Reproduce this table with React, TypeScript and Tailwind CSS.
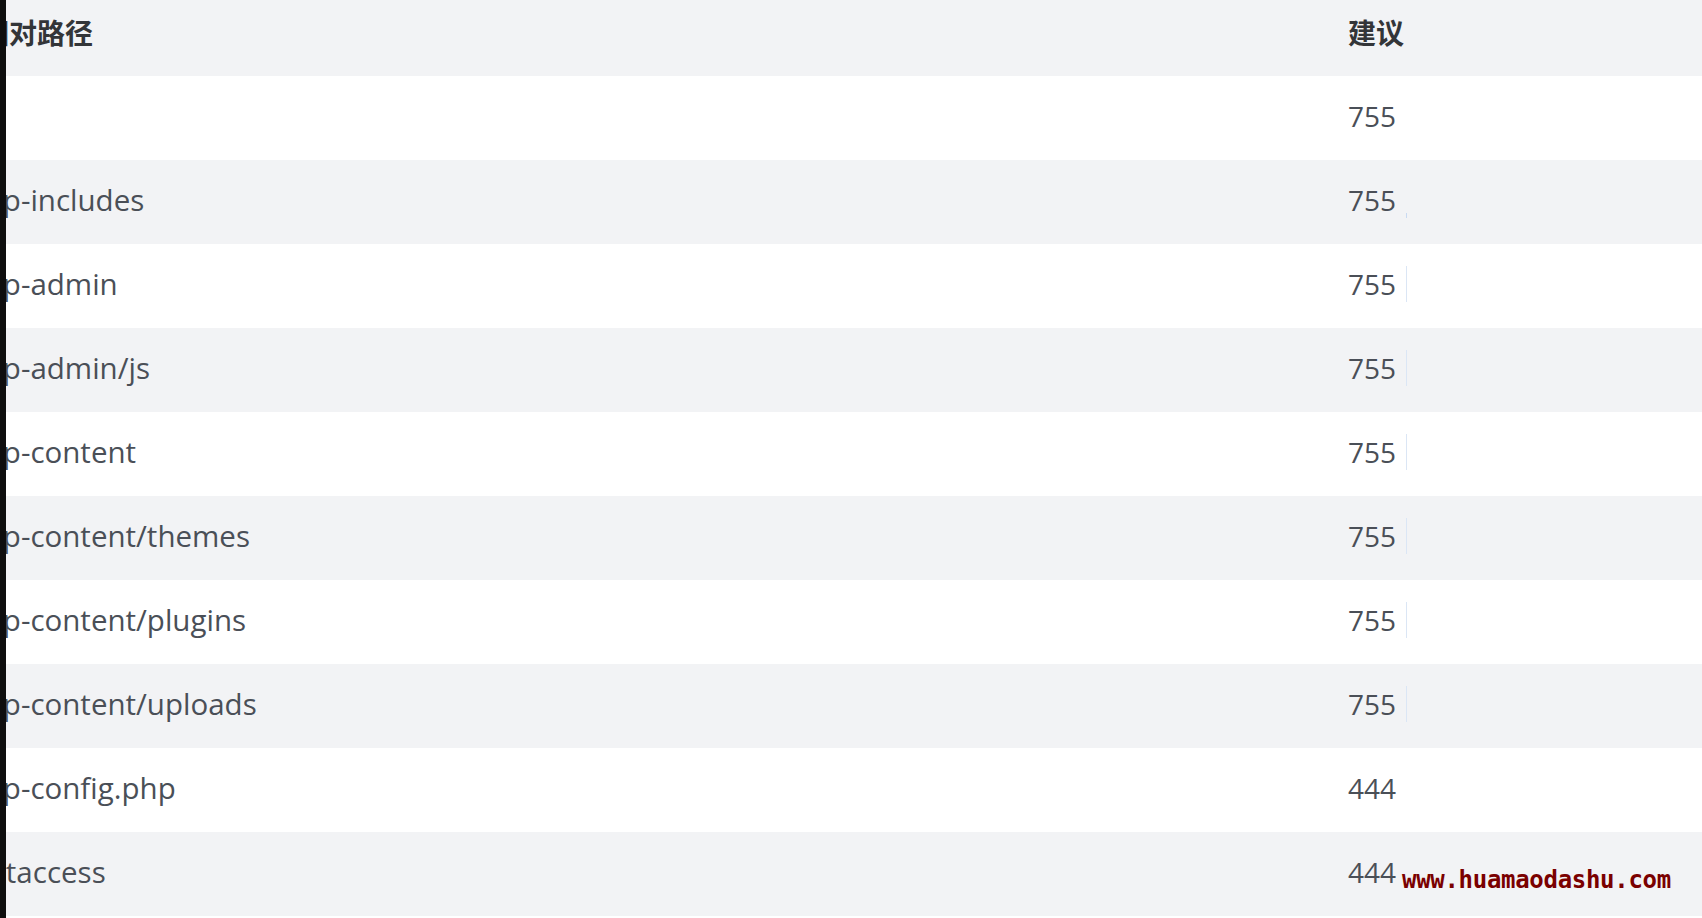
const rows = [
  { path: 'wordpress', perm: '755', mark: null },
  { path: 'wp-includes', perm: '755', mark: 'tick' },
  { path: 'wp-admin', perm: '755', mark: 'line' },
  { path: 'wp-admin/js', perm: '755', mark: 'line' },
  { path: 'wp-content', perm: '755', mark: 'line' },
  { path: 'wp-content/themes', perm: '755', mark: 'line' },
  { path: 'wp-content/plugins', perm: '755', mark: 'line' },
  { path: 'wp-content/uploads', perm: '755', mark: 'line' },
  { path: 'wp-config.php', perm: '444', mark: null },
  { path: '.htaccess', perm: '444', mark: null },
];

export default function App() {
  return (
    <div
      className="relative flex h-[918px] w-full overflow-hidden bg-white"
      style={{ fontFamily: '"Open Sans", "Noto Sans CJK SC", sans-serif' }}
    >
      <div className="w-[6px] shrink-0 bg-[#0e0e0e]" />
      <div className="flex-1 overflow-hidden">
        <div className="ml-[-25px] flex flex-col">
          <div className="grid h-[76px] grid-cols-[1367px_1fr] items-center bg-[#f2f3f5] pb-[12px] text-[28px] font-bold text-[#333538]">
            <div style={{ fontFamily: '"Noto Sans CJK SC", sans-serif' }}>相对路径</div>
            <div style={{ fontFamily: '"Noto Sans CJK SC", sans-serif' }}>建议</div>
          </div>
          {rows.map((r, i) => (
            <div
              key={r.path}
              className={
                'grid h-[84px] grid-cols-[1367px_1fr] items-center pb-[4px] text-[28px] text-[#4a4f57] ' +
                (i % 2 === 0 ? 'bg-white' : 'bg-[#f2f3f5]')
              }
            >
              <div className="ml-[-1px] whitespace-nowrap text-[29.5px]">{i === 0 ? '' : r.path}</div>
              <div className="flex items-center">
                <span>{r.perm}</span>
                {r.mark === 'line' && (
                  <span className="ml-[10px] inline-block h-[36px] w-px bg-[#dbe6f5]" />
                )}
                {r.mark === 'tick' && (
                  <span className="ml-[10px] mt-[30px] inline-block h-[5px] w-px bg-[#c9daf2]" />
                )}
              </div>
            </div>
          ))}
        </div>
      </div>
      <div
        className="absolute left-[1402px] top-[868px] text-[24px] font-bold leading-none tracking-[-0.3px] text-[#7a0000]"
        style={{ fontFamily: '"DejaVu Sans Mono", monospace' }}
      >
        www.huamaodashu.com
      </div>
    </div>
  );
}
